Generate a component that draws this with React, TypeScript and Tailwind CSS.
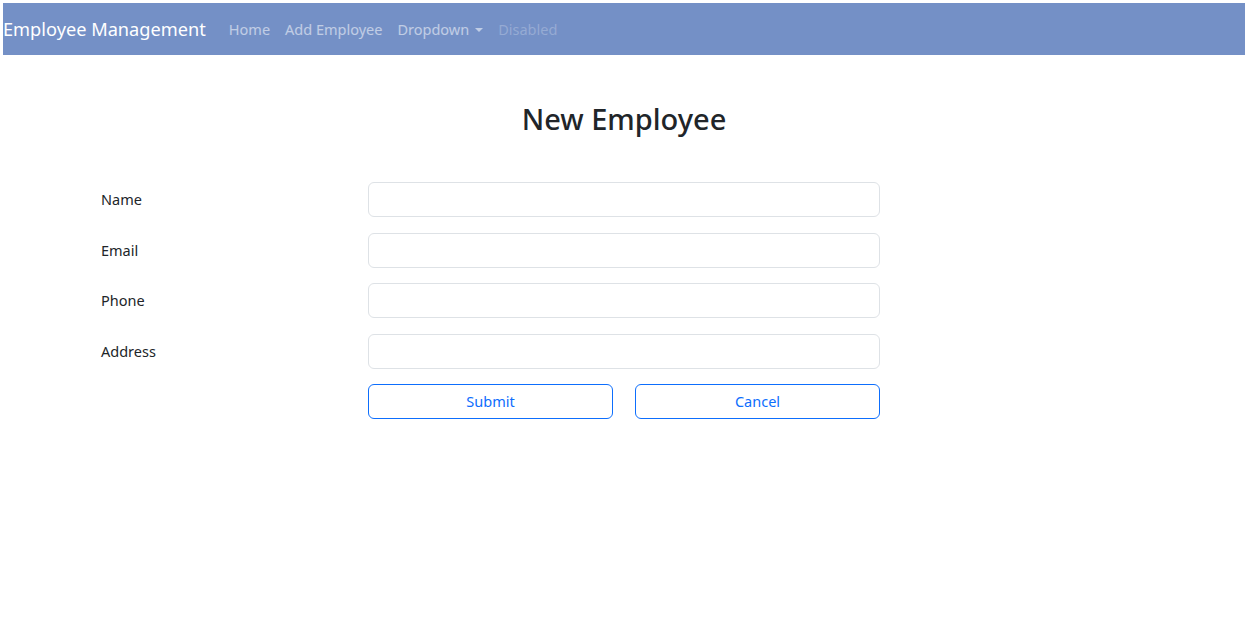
import React from "react";

const fields = ["Name", "Email", "Phone", "Address"];

export default function App() {
  return (
    <div className="min-h-screen bg-white p-[3px] font-['Noto_Sans',sans-serif] text-[#212529]">
      {/* Navbar */}
      <nav className="flex h-[52px] items-center bg-[#7490c6]">
        <span className="mr-[23px] text-[18.2px] leading-none text-white">Employee Management</span>
        <div className="flex items-center gap-[15px] text-[14.5px] leading-none">
          <a className="text-white/55">Home</a>
          <a className="text-white/55">Add Employee</a>
          <a className="flex items-center text-white/55">
            Dropdown
            <span className="ml-[6px] mt-[2px] inline-block h-0 w-0 border-x-[4px] border-t-[4px] border-x-transparent border-t-white/55" />
          </a>
          <a className="text-white/25">Disabled</a>
        </div>
      </nav>

      <h1 className="mt-[44px] text-center text-[29px] font-medium leading-[40px] text-[#212529]">
        New Employee
      </h1>

      <form className="ml-[98px] mt-[43px] flex w-[779px] flex-col gap-[15.5px]">
        {fields.map((f) => (
          <div key={f} className="flex items-center">
            <label className="w-[267px] text-[14.5px] leading-none">{f}</label>
            <input className="h-[35px] w-[512px] rounded-[6px] border border-[#dee2e6] bg-white px-3 outline-none" />
          </div>
        ))}
        <div className="flex">
          <div className="w-[267px]" />
          <div className="flex w-[512px] gap-[22px]">
            <button
              type="button"
              className="h-[35px] flex-1 rounded-[6px] border border-[#0d6efd] text-[14.5px] text-[#0d6efd]"
            >
              Submit
            </button>
            <button
              type="button"
              className="h-[35px] flex-1 rounded-[6px] border border-[#0d6efd] text-[14.5px] text-[#0d6efd]"
            >
              Cancel
            </button>
          </div>
        </div>
      </form>
    </div>
  );
}
